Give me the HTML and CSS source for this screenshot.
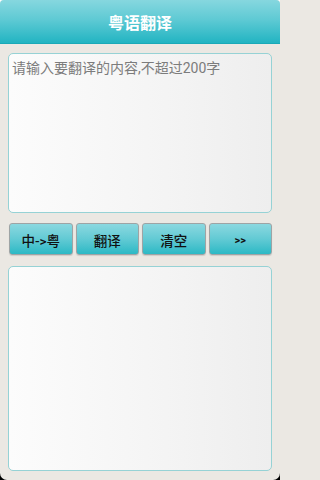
FILE: index.html
```html
<!DOCTYPE html>
<html lang="zh">
<head>
<meta charset="utf-8">
<title>粤语翻译</title>
<link rel="stylesheet" href="styles.css">
</head>
<body>
<div class="frame">
  <div class="screen">
    <header class="titlebar">粤语翻译</header>
    <main class="content">
      <textarea class="box box-input" placeholder="请输入要翻译的内容,不超过200字" autofocus></textarea>
      <div class="actions">
        <button class="btn">中-&gt;粤</button>
        <button class="btn">翻译</button>
        <button class="btn">清空</button>
        <button class="btn btn-small">&gt;&gt;</button>
      </div>
      <textarea class="box box-output" readonly></textarea>
    </main>
  </div>
</div>
</body>
</html>
```

FILE: styles.css
```css
html, body {
  margin: 0;
  padding: 0;
  height: 480px;
  overflow: hidden;
  background: #ebe8e3;
}
body {
  font-family: "Roboto", "Noto Sans CJK SC", sans-serif;
}
.frame {
  width: 280px;
  height: 480px;
  background: linear-gradient(to bottom, #ffffff 0, #ffffff 50%, #000000 50%, #000000 100%);
}
.screen {
  width: 280px;
  height: 480px;
  border-radius: 4px 4px 7px 7px;
  overflow: hidden;
  background: #ebe8e3;
  display: flex;
  flex-direction: column;
}
.titlebar {
  height: 44px;
  flex: none;
  display: flex;
  align-items: center;
  justify-content: center;
  color: #ffffff;
  font-size: 16px;
  font-weight: bold;
  background: linear-gradient(to bottom, #86d7df 0%, #5fcad4 45%, #22b4c2 100%);
  border-bottom: 1px solid #1aa9b7;
  box-sizing: border-box;
  padding-top: 1px;
}
.content {
  flex: 1;
  display: flex;
  flex-direction: column;
  padding: 9px 8px 9px 8px;
  box-sizing: border-box;
}
.box {
  display: block;
  width: 100%;
  box-sizing: border-box;
  border: 1px solid #96d2d5;
  border-radius: 5px;
  background: linear-gradient(to right, #fcfcfc 0%, #f4f4f4 60%, #eeeeee 100%);
  resize: none;
  outline: none;
  margin: 0;
  font-family: "Roboto", "Noto Sans CJK SC", sans-serif;
  font-size: 14px;
  color: #333;
  caret-color: #555;
}
.box-input {
  height: 160px;
  padding: 5px 3px;
  line-height: 18px;
}
.box-input::placeholder {
  color: #7c7c7c;
  opacity: 1;
}
.box-output {
  flex: 1;
  margin-top: 11px;
}
.actions {
  display: grid;
  grid-template-columns: repeat(4, 1fr);
  gap: 3px;
  margin: 10px 0 0 1px;
  height: 32px;
}
.btn {
  margin: 0;
  padding: 2px 0 0 0;
  border: 1px solid #9ea4a5;
  border-radius: 3px;
  background: linear-gradient(to bottom, #8bd8e0 0%, #62cad4 50%, #2cb9c5 100%);
  color: #111111;
  font-family: "Roboto", "Noto Sans CJK SC", sans-serif;
  font-size: 13.5px;
  font-weight: 500;
  box-shadow: 0 1px 1px rgba(0, 0, 0, 0.12);
}
.btn-small {
  font-size: 11px;
  font-weight: bold;
}
```
